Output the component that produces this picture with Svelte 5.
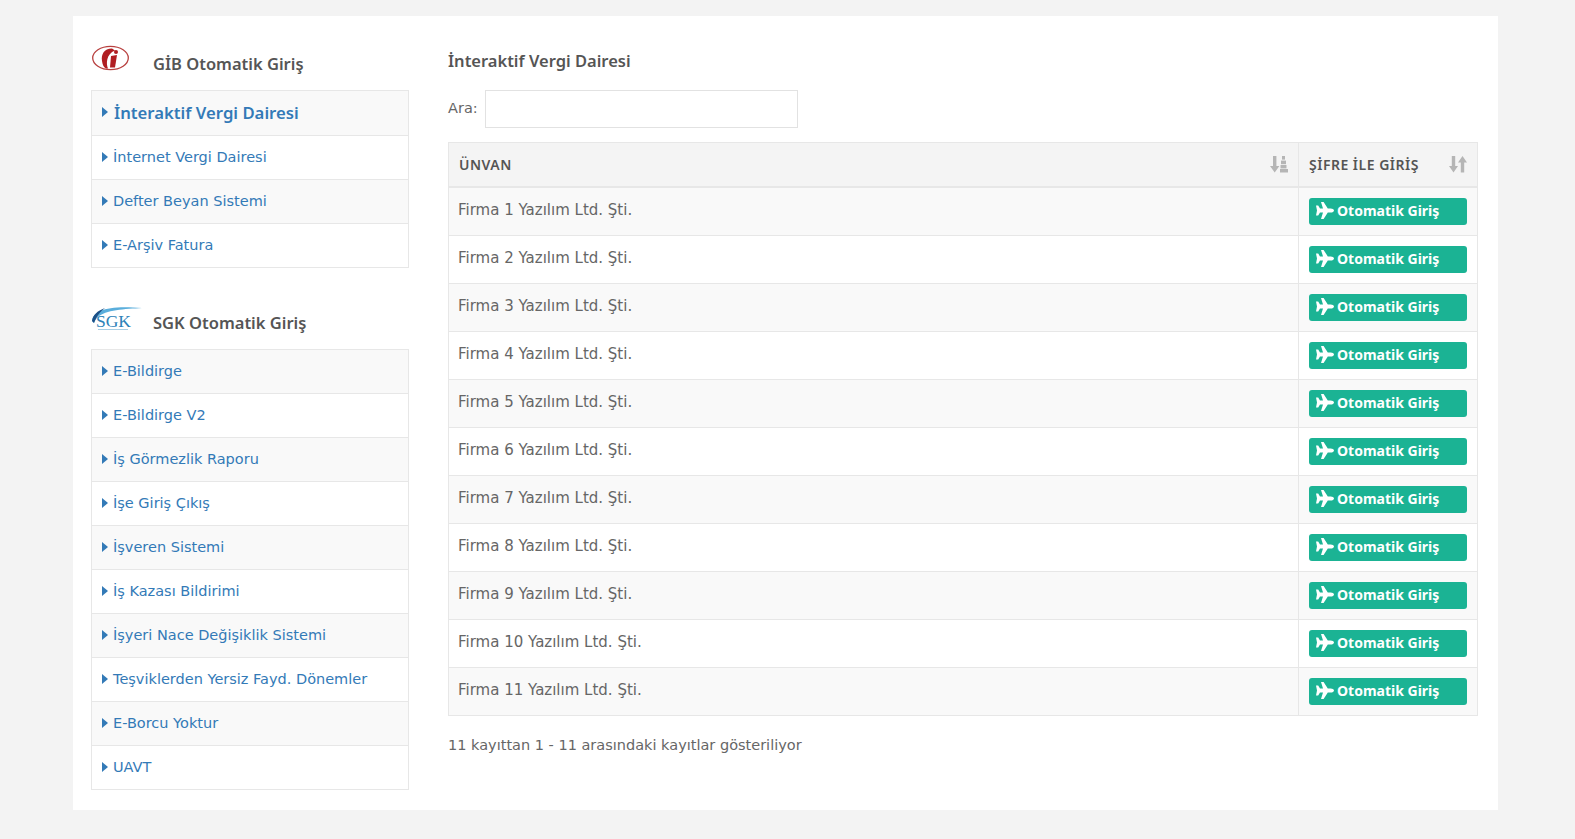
<script>
  const gib = ["İnternet Vergi Dairesi", "Defter Beyan Sistemi", "E-Arşiv Fatura"];
  const sgk = [
    "E-Bildirge",
    "E-Bildirge V2",
    "İş Görmezlik Raporu",
    "İşe Giriş Çıkış",
    "İşveren Sistemi",
    "İş Kazası Bildirimi",
    "İşyeri Nace Değişiklik Sistemi",
    "Teşviklerden Yersiz Fayd. Dönemler",
    "E-Borcu Yoktur",
    "UAVT"
  ];
  const firms = Array.from({ length: 11 }, (_, i) => `Firma ${i + 1} Yazılım Ltd. Şti.`);
</script>

{#snippet caret()}
  <svg class="caret" viewBox="0 0 6 10" width="6" height="10"><path d="M0 0 L6 5 L0 10 Z" /></svg>
{/snippet}

<div class="panel">
  <aside class="side">
    <div class="heading">
      <svg class="logo" width="40" height="28" viewBox="0 0 40 28">
        <ellipse cx="19.5" cy="14" rx="17.8" ry="11.7" fill="#fff" stroke="#b8403f" stroke-width="1.3" />
        <path d="M21 4.5 C13 4.5 10 10.5 11 17 C11.5 21 13 23.5 15 24.5 L17 24.5 C15 20 15 10 24 6.5 Z" fill="#b01e22" />
        <circle cx="25" cy="8" r="2" fill="#b01e22" />
        <path d="M20 12 L26 11 L24 23.5 L19 23.5 Z" fill="#b01e22" />
      </svg>
      <h4>GİB Otomatik Giriş</h4>
    </div>
    <ul class="list">
      <li class="active"><a href="#top">{@render caret()}İnteraktif Vergi Dairesi</a></li>
      {#each gib as item, i}
        <li class:odd={i % 2 === 1}><a href="#top">{@render caret()}{item}</a></li>
      {/each}
    </ul>

    <div class="heading second">
      <svg class="logo" width="52" height="27" viewBox="0 0 52 27">
        <path d="M1 17 C2 6 18 1 51 4 C34 5 14 6 7 13 C5 15 4 16 3 19 Z" fill="#5aaedc" />
        <path d="M1 17 C2 11 6 7 14 4 C10 7 6 11 3 19 Z" fill="#1c4f86" />
        <text x="5" y="23" class="sgk">SGK</text>
        <rect x="7" y="25" width="30" height="1" fill="#a9cfe4" />
      </svg>
      <h4>SGK Otomatik Giriş</h4>
    </div>
    <ul class="list tight">
      {#each sgk as item, i}
        <li class:odd={i % 2 === 0}><a href="#top">{@render caret()}{item}</a></li>
      {/each}
    </ul>
  </aside>

  <main class="content">
    <h4 class="title">İnteraktif Vergi Dairesi</h4>
    <label class="search"><span>Ara:</span> <input type="search" /></label>

    <table>
      <thead>
        <tr>
          <th>
            <span class="th">ÜNVAN
              <svg width="18" height="18" viewBox="0 0 18 18" fill="#b5b5b5">
                <path d="M3 1 H6.4 V11 H9.4 L4.7 17.5 L0 11 H3 Z" />
                <rect x="12" y="1" width="3" height="3.6" />
                <rect x="11" y="5.6" width="5" height="3.6" />
                <rect x="10.5" y="10" width="6" height="3.4" />
                <rect x="10" y="14" width="8" height="3.5" />
              </svg>
            </span>
          </th>
          <th>
            <span class="th">ŞİFRE İLE GİRİŞ
              <svg width="18" height="18" viewBox="0 0 18 18" fill="#b5b5b5">
                <path d="M2.8 1 H6.2 V11 H9 L4.5 17.5 L0 11 H2.8 Z" />
                <path d="M11.8 17.5 H15.2 V7.5 H18 L13.5 1 L9 7.5 H11.8 Z" />
              </svg>
            </span>
          </th>
        </tr>
      </thead>
      <tbody>
        {#each firms as firm, i}
          <tr class:odd={i % 2 === 0}>
            <td><span class="firm">{firm}</span></td>
            <td>
              <button type="button">
                <svg width="18" height="17" viewBox="0 0 18 17" fill="#fff">
                  <path d="M18 8.5 C18 7.3 16.4 6.4 14.8 6.4 H11.8 L7.6 0 H5 L7 6.4 H4 L2.2 3.6 H0 L1 8.5 L0 13.4 H2.2 L4 10.6 H7 L5 17 H7.6 L11.8 10.6 H14.8 C16.4 10.6 18 9.7 18 8.5 Z" />
                </svg>
                Otomatik Giriş
              </button>
            </td>
          </tr>
        {/each}
      </tbody>
    </table>
    <p class="info">11 kayıttan 1 - 11 arasındaki kayıtlar gösteriliyor</p>
  </main>
</div>

<style>
  :global(body) {
    margin: 0;
    background: #f3f3f3;
    font-family: "DejaVu Sans", "Noto Sans", sans-serif;
    font-size: 14px;
    color: #666;
  }

  .panel {
    display: flex;
    box-sizing: border-box;
    width: 1425px;
    height: 794px;
    margin: 16px 0 0 73px;
    padding: 0 20px 0 18px;
    background: #fff;
  }

  .side {
    width: 318px;
    flex: none;
    margin-right: 39px;
  }

  .heading {
    display: flex;
    align-items: flex-start;
    height: 74px;
    box-sizing: border-box;
    padding-top: 30px;
  }

  .heading.second {
    height: 81px;
    padding-top: 38px;
  }

  .logo {
    flex: none;
    margin-top: -2px;
  }

  h4 {
    font-family: "Noto Sans", sans-serif;
  }

  .heading h4 {
    margin: 8px 0 0 22px;
    font-size: 16.5px;
    font-weight: 600;
    line-height: 20px;
    color: #555;
  }

  .heading.second h4 {
    margin: 7px 0 0 10px;
  }

  .sgk {
    font-family: "Liberation Serif", serif;
    font-size: 17.5px;
    fill: #2c82b8;
  }

  .list {
    margin: 0;
    padding: 0;
    list-style: none;
    border: 1px solid #e7e7e7;
  }

  .list li {
    height: 44px;
    box-sizing: border-box;
    border-top: 1px solid #e7e7e7;
  }

  .list li:first-child {
    border-top: none;
  }

  .list.tight li:first-child {
    height: 43px;
  }

  .list li.odd,
  .list li.active {
    background: #f9f9f9;
  }

  .list a {
    display: flex;
    align-items: center;
    height: 100%;
    box-sizing: border-box;
    padding: 0 0 2px 10px;
    color: #337ab7;
    text-decoration: none;
    font-size: 14.5px;
  }

  .list li.active a {
    font-family: "Noto Sans", sans-serif;
    font-size: 16.7px;
    font-weight: 600;
  }

  .caret {
    flex: none;
    margin-right: 5px;
    fill: #337ab7;
  }

  .list li.active .caret {
    margin-right: 6px;
  }

  .content {
    flex: 1;
    min-width: 0;
  }

  .title {
    margin: 35px 0 0;
    font-size: 16.5px;
    font-weight: 600;
    line-height: 20px;
    color: #555;
  }

  .search {
    display: flex;
    align-items: center;
    gap: 7px;
    margin-top: 19px;
    font-size: 14.5px;
  }

  .search span {
    margin-top: -3px;
  }

  .search input {
    box-sizing: border-box;
    width: 313px;
    height: 38px;
    margin: 0;
    border: 1px solid #e2e2e2;
    background: #fff;
    outline: none;
  }

  table {
    width: 100%;
    margin-top: 14px;
    border-collapse: collapse;
    table-layout: fixed;
  }

  th,
  td {
    padding: 0 10px;
    border: 1px solid #e7e7e7;
    text-align: left;
  }

  th {
    height: 43px;
    background: #f4f4f4;
    border-bottom-width: 2px;
    font-family: "Noto Sans", sans-serif;
    font-size: 14px;
    font-weight: 600;
    letter-spacing: 0.5px;
    color: #555;
  }

  th:last-child,
  td:last-child {
    width: 179px;
    box-sizing: border-box;
  }

  .th {
    display: flex;
    align-items: center;
    justify-content: space-between;
    margin-top: -1px;
  }

  td {
    height: 47px;
    font-size: 15px;
  }

  tr.odd td {
    background: #f9f9f9;
  }

  .firm {
    display: block;
    margin: -4px 0 0 -1px;
  }

  button {
    display: flex;
    align-items: center;
    gap: 3px;
    width: 158px;
    height: 27px;
    padding: 0 7px 2px;
    border: none;
    border-radius: 3px;
    background: #1bb394;
    color: #fff;
    font-family: "Noto Sans", sans-serif;
    font-size: 14px;
    font-weight: 700;
  }

  .info {
    margin: 21px 0 0;
    font-size: 14.5px;
  }
</style>
